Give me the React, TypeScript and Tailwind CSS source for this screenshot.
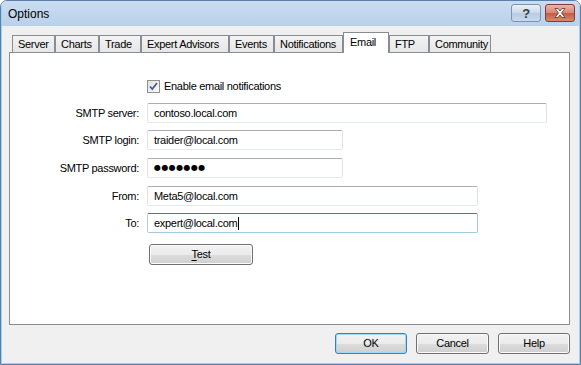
import React from 'react';

const tabs = [
  { label: 'Server', w: 'w-[43px]' },
  { label: 'Charts', w: 'w-[44px]' },
  { label: 'Trade', w: 'w-[42px]' },
  { label: 'Expert Advisors', w: 'w-[88px]' },
  { label: 'Events', w: 'w-[45px]' },
  { label: 'Notifications', w: 'w-[69px]' },
  { label: 'Email', w: 'w-[46px]', active: true },
  { label: 'FTP', w: 'w-[40px]' },
  { label: 'Community', w: 'w-[62px]' },
];

function Tab({ label, w, active }: { label: string; w: string; active?: boolean }) {
  if (active) {
    return (
      <div className={`${w} relative z-10 -mb-px h-[21px] border border-b-0 border-[#898c95] bg-white pl-[6px] pt-[2px] leading-[14px]`}>
        {label}
      </div>
    );
  }
  return (
    <div className={`${w} h-[17px] border border-b-0 border-[#898c95] bg-[linear-gradient(#f3f3f3,#e6e6e6)] pl-[5px] pt-[2px] leading-[13px]`}>
      {label}
    </div>
  );
}

function TextBox({ w, value, focused }: { w: string; value: React.ReactNode; focused?: boolean }) {
  const border = focused
    ? 'border-[#a4c9e3] border-t-[#3d7bad] border-l-[#b5cfe7]'
    : 'border-[#e2e3ea] border-t-[#abadb3] border-b-[#e3e9ef]';
  return (
    <div className={`${w} ${border} flex h-[20px] items-center rounded-[2px] border bg-white pl-[6px]`}>
      {value}
    </div>
  );
}

function Row({ label, children, mt }: { label: string; children: React.ReactNode; mt: string }) {
  return (
    <div className={`${mt} flex h-[20px] items-center`}>
      <div className="w-[130px] pr-[1px] text-right">{label}</div>
      <div className="ml-[7px]">{children}</div>
    </div>
  );
}

function Button({ children, w, def }: { children: React.ReactNode; w: string; def?: boolean }) {
  const edge = def
    ? 'border-[#3c7fb1] shadow-[inset_0_0_0_1px_#9ed9f8]'
    : 'border-[#707070] shadow-[inset_0_0_0_1px_#fbfbfb]';
  return (
    <div className={`${w} ${edge} flex h-[21px] items-center justify-center rounded-[3px] border bg-[linear-gradient(#f2f2f2_0%,#ebebeb_50%,#dddddd_51%,#cfcfcf_100%)]`}>
      {children}
    </div>
  );
}

export default function App() {
  return (
    <div className="h-[365px] w-[581px] overflow-hidden rounded-t-[7px] border border-[#5a7fa8] bg-[#f0f0f0] font-['Liberation_Sans',Arial,sans-serif] text-[11px] tracking-[-0.3px] text-black">
      <div className="flex h-full flex-col border-x border-b border-[#9fd0f0] border-t-0">
        {/* title bar */}
        <div className="flex h-[25px] items-center bg-[linear-gradient(#cadcf1,#b9d1ea)] pl-[6px] pr-[4px]">
          <div className="flex-1 text-[12px] tracking-normal">Options</div>
          <div className="flex gap-[4px] self-start pt-[3px]">
            <div className="flex h-[18px] w-[30px] items-center justify-center rounded-[3px] border border-[#7e93b0] bg-[linear-gradient(#e9f0f9,#cbd9ec_50%,#b7cbe4_51%,#c9d9ee)] text-[13px] font-bold leading-none text-[#3a3a3a]">
              ?
            </div>
            <div className="flex h-[18px] w-[30px] items-center justify-center rounded-[3px] border border-[#843a30] bg-[linear-gradient(#eab3a8,#d98674_50%,#c75a45_51%,#d88a70)]">
              <svg width="12" height="10" viewBox="0 0 12 10">
                <path d="M1 0.5h3l2 2.5 2-2.5h3l-3.5 4.5 3.5 4.5h-3l-2-2.5-2 2.5h-3l3.5-4.5z" fill="#fff" stroke="#6b2a22" strokeWidth="0.8" />
              </svg>
            </div>
          </div>
        </div>

        {/* body */}
        <div className="flex flex-1 flex-col pl-[7px] pr-[9px] pt-[6px]">
          <div className="flex h-[20px] items-end pl-[3px]">
            {tabs.map(t => (
              <Tab key={t.label} label={t.label} w={t.w} active={t.active} />
            ))}
          </div>

          <div className="flex h-[273px] flex-col border border-[#898c95] bg-white">
            <div className="mt-[27px] flex h-[13px] items-center">
              <div className="ml-[137px] flex h-[13px] w-[13px] items-center justify-center border border-[#8e8f8f] bg-[linear-gradient(135deg,#e1e1e1,#fbfbfb)]">
                <svg width="9" height="9" viewBox="0 0 9 9">
                  <path d="M1 4.5l2.3 2.6L8 1" fill="none" stroke="#4a5f97" strokeWidth="1.8" />
                </svg>
              </div>
              <div className="ml-[4px]">Enable email notifications</div>
            </div>

            <Row label="SMTP server:" mt="mt-[10px]">
              <TextBox w="w-[400px]" value="contoso.local.com" />
            </Row>
            <Row label="SMTP login:" mt="mt-[7px]">
              <TextBox w="w-[196px]" value="traider@local.com" />
            </Row>
            <Row label="SMTP password:" mt="mt-[8px]">
              <TextBox
                w="w-[196px]"
                value={<span className="font-['DejaVu_Sans',sans-serif] text-[8px] tracking-[0.4px]">●●●●●●●</span>}
              />
            </Row>
            <Row label="From:" mt="mt-[8px]">
              <TextBox w="w-[331px]" value="Meta5@local.com" />
            </Row>
            <Row label="To:" mt="mt-[7px]">
              <TextBox
                w="w-[331px]"
                focused
                value={
                  <>
                    <span>expert@local.com</span>
                    <span className="ml-px h-[13px] w-px bg-black" />
                  </>
                }
              />
            </Row>

            <div className="ml-[139px] mt-[11px]">
              <Button w="w-[104px]">
                <span>
                  <span className="underline underline-offset-2">T</span>est
                </span>
              </Button>
            </div>
          </div>

          <div className="mt-[8px] flex justify-end gap-[9px]">
            <Button w="w-[72px]" def>OK</Button>
            <Button w="w-[73px]">Cancel</Button>
            <Button w="w-[72px]">Help</Button>
          </div>
        </div>
      </div>
    </div>
  );
}
